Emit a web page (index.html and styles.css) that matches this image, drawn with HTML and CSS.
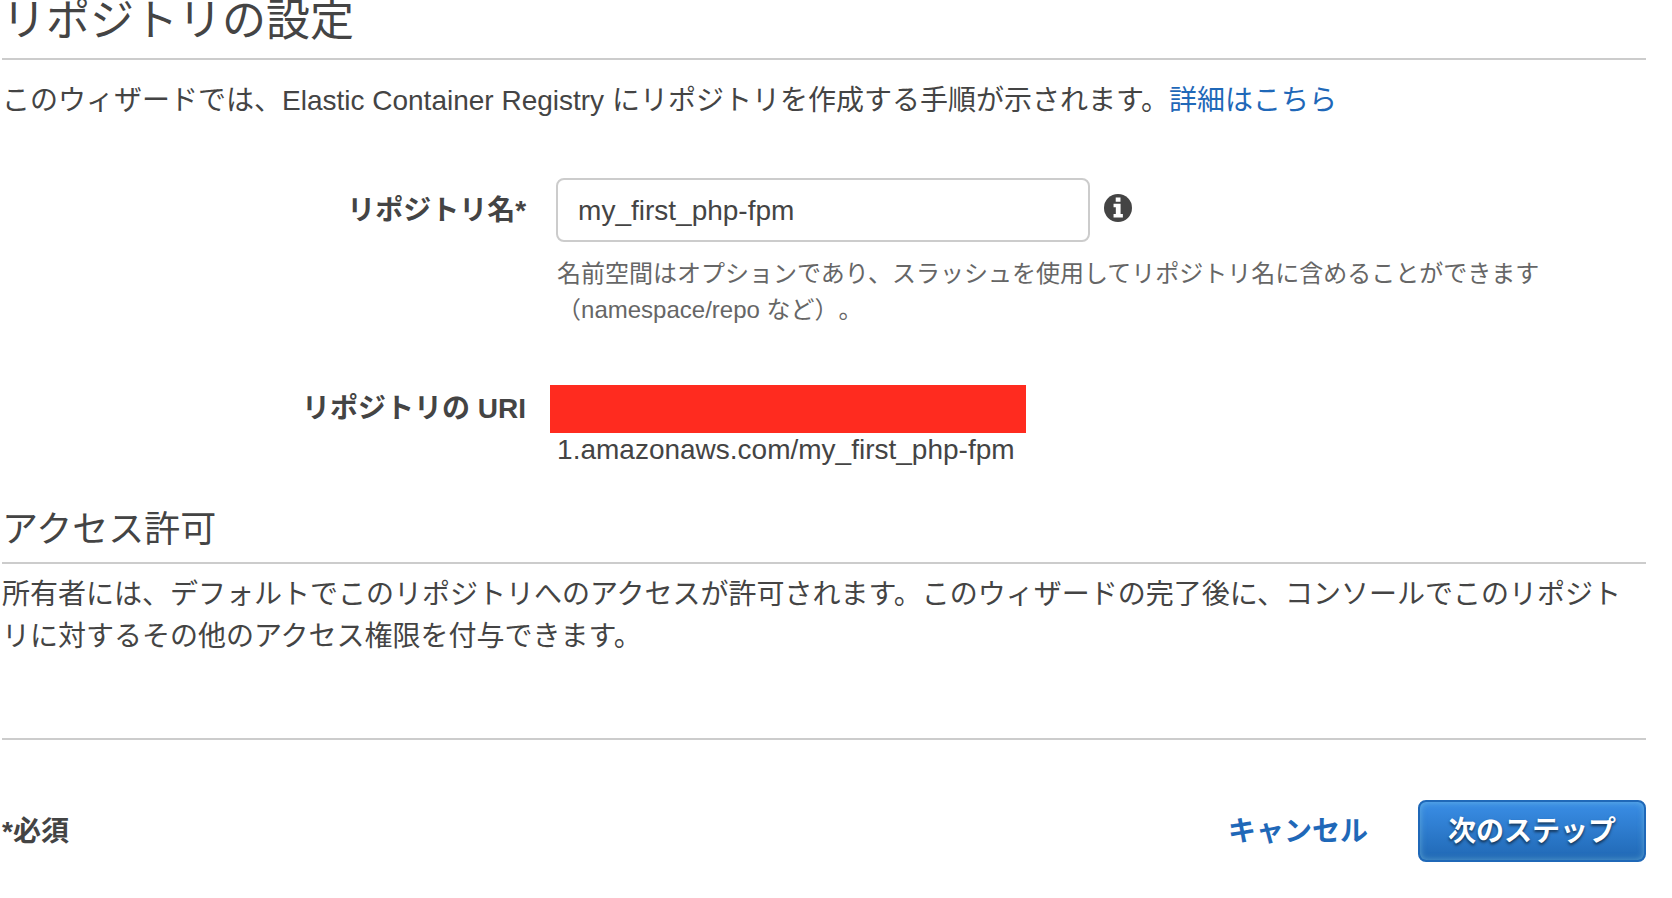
FILE: index.html
```html
<!DOCTYPE html>
<html lang="ja">
<head>
<meta charset="utf-8">
<meta name="viewport" content="width=device-width, initial-scale=1">
<title>リポジトリの設定</title>
<link rel="stylesheet" href="styles.css">
</head>
<body>
<main class="wizard">
  <h1 class="title">リポジトリの設定</h1>
  <p class="intro">このウィザードでは、Elastic Container Registry にリポジトリを作成する手順が示されます。<a class="link" href="#">詳細はこちら</a></p>

  <form class="form">
    <div class="row">
      <label class="label" for="repo-name">リポジトリ名*</label>
      <div class="field">
        <div class="control">
          <input class="input" id="repo-name" type="text" value="my_first_php-fpm" aria-describedby="repo-hint" required>
          <svg class="info" viewBox="0 0 27 27" role="img" aria-label="情報">
            <circle cx="13.5" cy="13.5" r="13.5" fill="#444"/>
            <path fill="#fff" d="M11.3 3.4h4.6v4H11.3zM9.2 9.4h6.8v9.8h2.2v3.4H9.2v-3.4h2.2v-6.4H9.2z"/>
          </svg>
        </div>
        <p class="hint" id="repo-hint">名前空間はオプションであり、スラッシュを使用してリポジトリ名に含めることができます（namespace/repo など）。</p>
      </div>
    </div>

    <div class="row row-uri">
      <span class="label">リポジトリの URI</span>
      <div class="field">
        <div class="redaction"></div>
        <div class="uri">1.amazonaws.com/my_first_php-fpm</div>
      </div>
    </div>

    <h2 class="subtitle">アクセス許可</h2>
    <p class="access">所有者には、デフォルトでこのリポジトリへのアクセスが許可されます。このウィザードの完了後に、コンソールでこのリポジトリに対するその他のアクセス権限を付与できます。</p>

    <footer class="footer">
      <strong class="required">*必須</strong>
      <a class="link cancel" href="#">キャンセル</a>
      <button class="button" type="submit">次のステップ</button>
    </footer>
  </form>
</main>
</body>
</html>
```

FILE: styles.css
```css
* {
  box-sizing: border-box;
}

body {
  margin: 0;
  background: #fff;
  color: #444;
  font-family: "Liberation Sans", "Noto Sans CJK JP", sans-serif;
  font-size: 28px;
  line-height: 42px;
  text-spacing-trim: space-all;
}

h1, h2, p {
  margin: 0;
}

.wizard {
  padding: 0 26px 36px 2px;
}

.title {
  padding-bottom: 16px;
  border-bottom: 2px solid #ccc;
  font-size: 44px;
  font-weight: 400;
  line-height: 42px;
}

.intro {
  padding-top: 20px;
}

.link {
  color: #1f68b8;
  text-decoration: none;
}

.row {
  display: grid;
  grid-template-columns: 32% 1fr;
  column-gap: 28px;
  padding-top: 56px;
}

.row-uri {
  padding-top: 57px;
}

.label {
  padding-top: 12px;
  padding-right: 2px;
  font-weight: 700;
  text-align: right;
}

.row-uri .label {
  padding-top: 3px;
}

.control {
  display: flex;
  align-items: center;
  gap: 14px;
}

.input {
  width: 49%;
  height: 64px;
  padding: 2px 20px 0;
  border: 2px solid #ccc;
  border-radius: 8px;
  background: #fff;
  color: #444;
  font: inherit;
}

.info {
  width: 28px;
  height: 28px;
  margin-bottom: 4px;
}

.hint {
  max-width: 1000px;
  padding-top: 14px;
  padding-left: 1px;
  color: #666;
  font-size: 24px;
  line-height: 36px;
}

.redaction {
  width: 476px;
  height: 48px;
  margin-left: -6px;
  background: #ff2b1f;
}

.uri {
  padding-left: 1px;
  line-height: 34px;
}

.subtitle {
  padding-top: 41px;
  padding-bottom: 10px;
  border-bottom: 2px solid #ccc;
  font-size: 36px;
  font-weight: 400;
  line-height: 44px;
}

.access {
  padding-top: 10px;
}

.footer {
  display: flex;
  align-items: center;
  gap: 50px;
  margin-top: 80px;
  padding-top: 60px;
  border-top: 2px solid #ccc;
}

.required {
  margin-right: auto;
}

.required,
.cancel {
  padding-top: 2px;
}

.cancel {
  font-weight: 700;
}

.button {
  height: 62px;
  padding: 2px 28px 0;
  border: 2px solid #1f68b8;
  border-radius: 8px;
  background: linear-gradient(#3a8ee6, #2068b4);
  box-shadow: inset 0 0 6px rgba(130, 200, 225, 0.6);
  color: #fff;
  font: inherit;
  font-weight: 700;
  text-shadow: 0 2px 3px rgba(0, 0, 0, 0.6);
}
```
